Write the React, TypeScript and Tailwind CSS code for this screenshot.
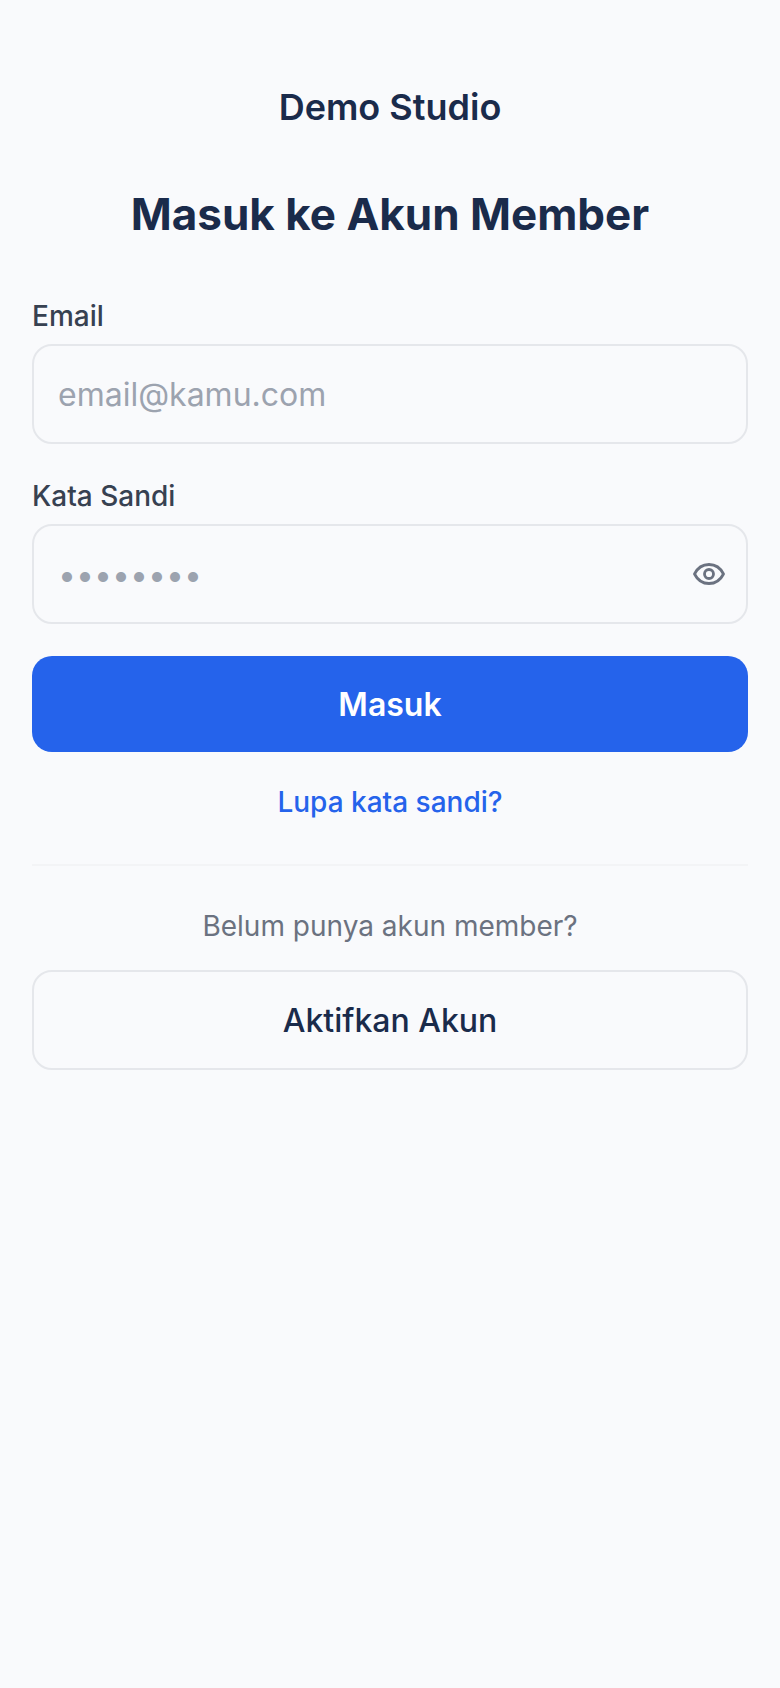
import React from "react";

const INTER = "font-['Inter',sans-serif]";

export default function App() {
  return (
    <div className={`min-h-[1688px] bg-[#f9fafc] px-8 pt-[84px] ${INTER}`}>
      <div className="text-center text-[36px] leading-[46px] font-semibold text-[#1a2b4b]">Demo Studio</div>
      <h1 className="mt-[56px] text-center text-[44px] leading-[56px] font-bold text-[#1a2b4b]">Masuk ke Akun Member</h1>

      <form className="mt-[54px] flex flex-col">
        <label className="mb-2 text-[28px] leading-[40px] font-medium text-[#374151]">Email</label>
        <input
          placeholder="email@kamu.com"
          className="h-[100px] w-full rounded-[20px] border-2 border-[#e5e7eb] bg-transparent px-[24px] text-[32px] text-[#1a2b4b] outline-none placeholder:text-[#9ca3af]"
        />

        <label className="mt-8 mb-2 text-[28px] leading-[40px] font-medium text-[#374151]">Kata Sandi</label>
        <div className="relative">
          <input
            type="password"
            placeholder="••••••••"
            className="h-[100px] w-full rounded-[20px] border-2 border-[#e5e7eb] bg-transparent pr-[72px] pl-[24px] text-[32px] text-[#1a2b4b] outline-none placeholder:text-[#9ca3af]"
          />
          <button type="button" className="absolute top-1/2 right-[21px] -translate-y-1/2 text-[#6b7280]">
            <svg width="36" height="36" viewBox="0 0 36 36" fill="none" stroke="currentColor" strokeWidth="2.8" strokeLinecap="round" strokeLinejoin="round">
              <path d="M3.5 18C6.5 12 12 8.5 18 8.5S29.5 12 32.5 18C29.5 24 24 27.5 18 27.5S6.5 24 3.5 18Z" />
              <circle cx="18" cy="18" r="4.5" />
            </svg>
          </button>
        </div>

        <button type="button" className="mt-8 h-[96px] w-full rounded-[20px] bg-[#2563eb] pt-[2px] text-[32px] font-semibold text-white">
          Masuk
        </button>
      </form>

      <div className="mt-[30px] text-center text-[28px] leading-[40px] font-medium text-[#2563eb]">Lupa kata sandi?</div>
      <div className="mt-[42px] h-[2px] bg-[#f3f4f6]" />
      <p className="mt-10 text-center text-[28px] leading-[40px] text-[#6b7280]">Belum punya akun member?</p>
      <button type="button" className="mt-6 h-[100px] w-full rounded-[20px] border-2 border-[#e5e7eb] pt-[2px] text-[32px] font-medium text-[#1a2b4b]">
        Aktifkan Akun
      </button>
    </div>
  );
}
